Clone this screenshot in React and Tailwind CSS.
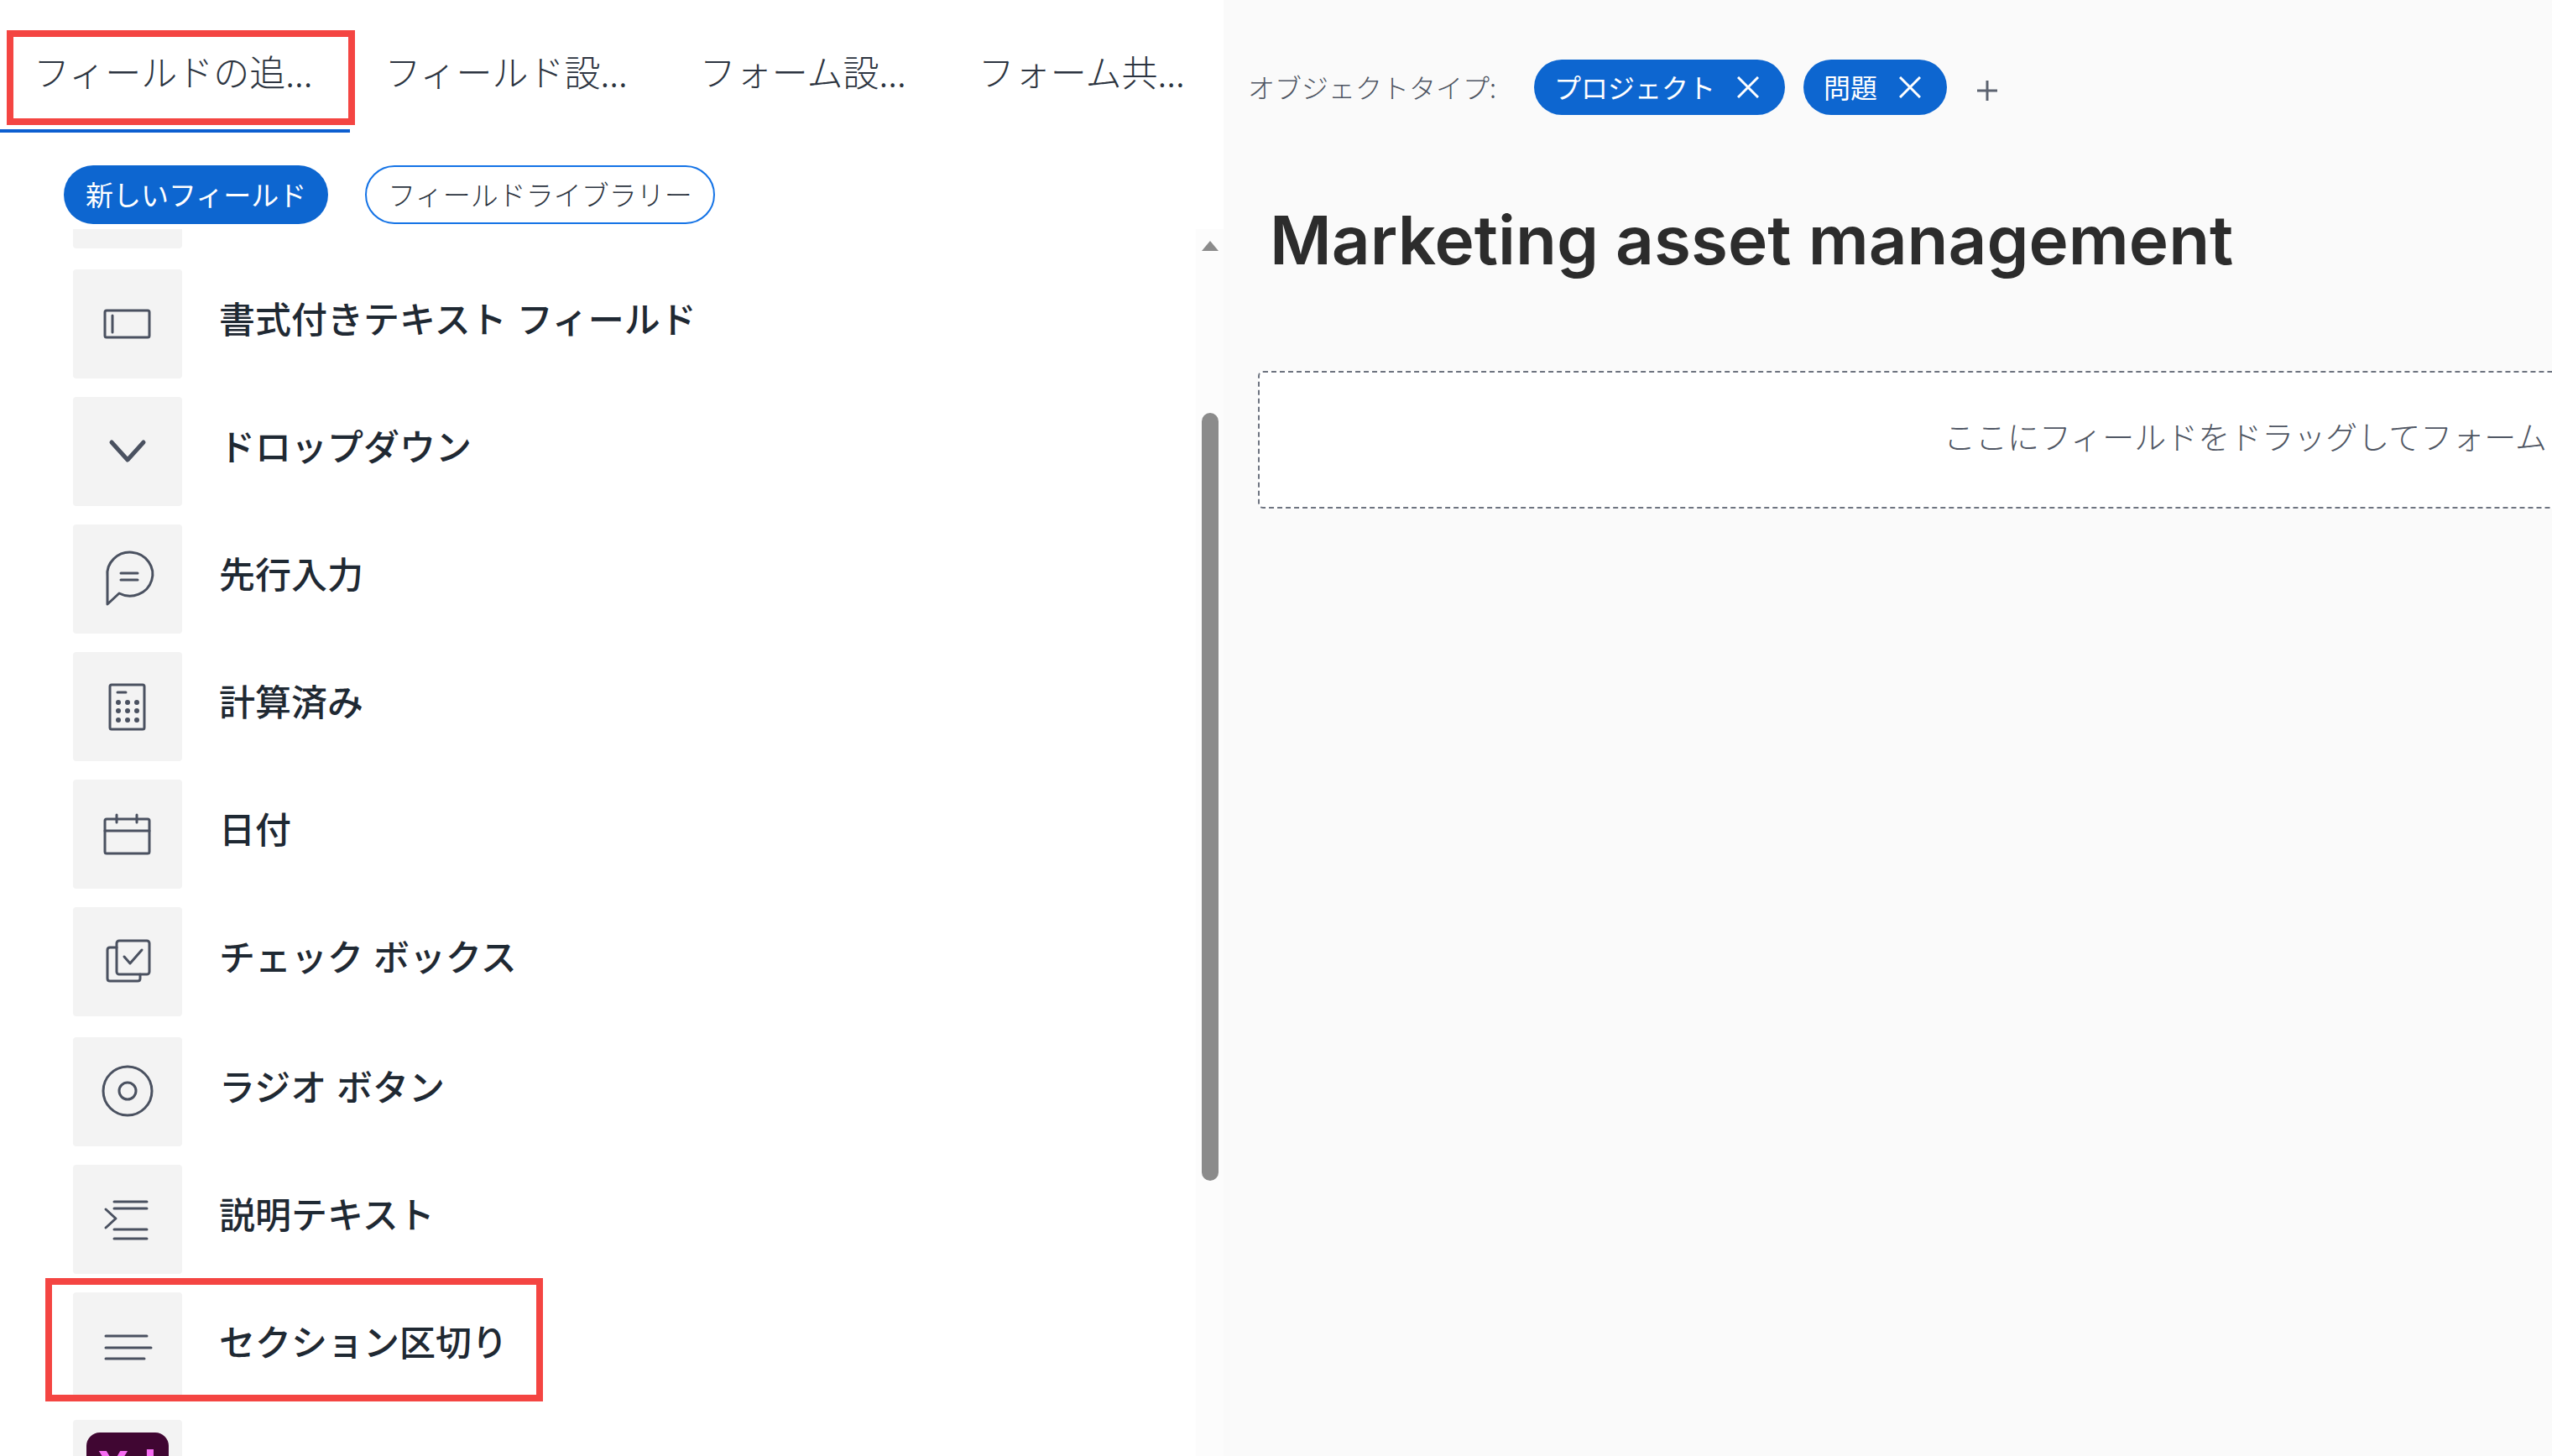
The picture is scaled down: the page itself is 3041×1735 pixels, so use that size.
function Icon({ children, width = 3 }) {
  return (
    <svg viewBox="0 0 130 130" className="size-full" fill="none" stroke="#4a5160" strokeWidth={width} strokeLinecap="round" strokeLinejoin="round" aria-hidden="true">
      {children}
    </svg>
  );
}

const TextFieldIcon = () => (
  <Icon>
    <rect x="38" y="49" width="53" height="32" rx="2" />
    <path d="M47 55v20" />
  </Icon>
);
const ChevronIcon = () => (
  <Icon width={5}>
    <path d="M46 54 65 75 84 54" />
  </Icon>
);
const BubbleIcon = () => (
  <Icon>
    <path d="M41 95V62a27 26 0 1 1 14 20Z" />
    <path d="M57 58h20M57 66h20" />
  </Icon>
);
const CalculatorIcon = () => (
  <Icon>
    <rect x="44" y="39" width="41" height="53" rx="2" />
    <path d="M53 48h10" />
    <g fill="#4a5160" stroke="none">
      {[60, 70, 81].map((y) => [54, 65, 76].map((x) => <circle key={x + "-" + y} cx={x} cy={y} r="3" />))}
    </g>
  </Icon>
);
const CalendarIcon = () => (
  <Icon>
    <rect x="38" y="47" width="53" height="41" rx="2" />
    <path d="M38 61h53M52 42v9M76 42v9" />
  </Icon>
);
const CheckIcon = () => (
  <Icon>
    <rect x="52" y="40" width="39" height="40" rx="3" />
    <path d="M52 48h-8q-3 0-3 3v34q0 3 3 3h33q3 0 3-3V80" />
    <path d="M61 59 68 67 82 51" />
  </Icon>
);
const RadioIcon = () => (
  <Icon>
    <circle cx="65" cy="64" r="29" />
    <circle cx="65" cy="64" r="10" />
  </Icon>
);
const IndentIcon = () => (
  <Icon>
    <path d="M49 44h39M49 52h39M49 77h39M49 88h39M39 53l12 11-12 11" />
  </Icon>
);
const LinesIcon = () => (
  <Icon>
    <path d="M39 52h49M39 66h54M39 79h46" />
  </Icon>
);

const inputFields = [
  ["書式付きテキスト フィールド", TextFieldIcon],
  ["ドロップダウン", ChevronIcon],
  ["先行入力", BubbleIcon],
  ["計算済み", CalculatorIcon],
  ["日付", CalendarIcon],
  ["チェック ボックス", CheckIcon],
];
const layoutFields = [
  ["ラジオ ボタン", RadioIcon],
  ["説明テキスト", IndentIcon],
  ["セクション区切り", LinesIcon, true],
];

function Field({ label, Glyph, marked }) {
  return (
    <li className="relative">
      <button type="button" className="flex h-[130px] w-full items-center gap-[44px] text-left">
        <span className="size-[130px] shrink-0 rounded-sm bg-[#f3f3f3]">
          <Glyph />
        </span>
        <span className='pb-2 font-["Liberation_Sans","Noto_Sans_CJK_JP",sans-serif] text-[43px] leading-[56px] font-medium whitespace-nowrap text-[#1f2933]'>
          {label}
        </span>
      </button>
      {marked && <span className="absolute -top-[17px] -left-[33px] h-[147px] w-[593px] border-8 border-[#f44542]" />}
    </li>
  );
}

function Tab({ children, selected }) {
  return (
    <button type="button" role="tab" aria-selected={!!selected} className="h-full pt-[10px] text-[43px] leading-[60px] font-light whitespace-nowrap">
      {children}
    </button>
  );
}

function Chip({ children }) {
  return (
    <span className="flex h-[66px] items-center gap-[26px] rounded-full bg-[#0d66d0] pr-[31px] pl-6 text-[32px] leading-[40px] whitespace-nowrap text-white">
      <span className="pb-[2px]">{children}</span>
      <button type="button" aria-label="削除">
        <svg viewBox="0 0 26 26" className="size-[26px]" fill="none" stroke="currentColor" strokeWidth="3" aria-hidden="true">
          <path d="M1 1 25 25M25 1 1 25" />
        </svg>
      </button>
    </span>
  );
}

export default function App() {
  return (
    <div className='flex h-screen overflow-hidden bg-white font-["Noto_Sans_CJK_JP",sans-serif] text-[#2c3440]'>
      <aside className="flex w-[1458px] shrink-0 flex-col">
        <div role="tablist" className="relative flex h-[158px] shrink-0 items-center gap-[86px] pl-[40px]">
          <Tab selected>フィールドの追...</Tab>
          <Tab>フィールド設...</Tab>
          <Tab>フォーム設...</Tab>
          <Tab>フォーム共...</Tab>
          <span className="absolute bottom-0 left-0 h-[4px] w-[417px] bg-[#0d5fd0]" />
          <span className="absolute top-[36px] left-[8px] h-[113px] w-[415px] border-8 border-[#f44542]" />
        </div>
        <div className="flex h-[115px] shrink-0 items-start gap-[44px] pt-[39px] pl-[76px] text-[33px] leading-[40px] whitespace-nowrap">
          <button type="button" className="h-[70px] rounded-full bg-[#0d66d0] px-[26px] pb-[2px] text-white">新しいフィールド</button>
          <button type="button" className="h-[70px] rounded-full border-2 border-[#1473e6] px-[25px] pb-[2px] font-light">フィールドライブラリー</button>
        </div>
        <div className="flex min-h-0 flex-1">
          <div className="flex flex-1 flex-col gap-[25px] overflow-hidden pl-[87px]">
            <span className="h-[23px] w-[130px] shrink-0 rounded-b-sm bg-[#f3f3f3]" />
            <ul className="flex flex-col gap-[22px]">
              {inputFields.map(([label, Glyph]) => (
                <Field key={label} label={label} Glyph={Glyph} />
              ))}
            </ul>
            <ul className="flex flex-col gap-[22px]">
              {layoutFields.map(([label, Glyph, marked]) => (
                <Field key={label} label={label} Glyph={Glyph} marked={marked} />
              ))}
              <li className="size-[130px] shrink-0 rounded-sm bg-[#f3f3f3] px-4 pt-[15px]">
                <span className='block h-[100px] rounded-2xl bg-[#400632] text-center font-["Open_Sans",sans-serif] text-[54px] leading-[80px] font-bold text-[#f66cf2]'>
                  Xd
                </span>
              </li>
            </ul>
          </div>
          <div className="flex w-[33px] shrink-0 flex-col items-center bg-[#fcfcfc] pt-[14px]">
            <svg viewBox="0 0 20 12" className="h-[12px] w-[20px]" aria-hidden="true">
              <path d="M10 0 20 12H0Z" fill="#8b8b8b" />
            </svg>
            <span className="mt-[193px] h-[915px] w-[20px] rounded-full bg-[#8b8b8b]" />
          </div>
        </div>
      </aside>
      <main className="min-w-0 flex-1 bg-[#fafafa]">
        <div className="flex items-center pt-[71px] pl-[29px]">
          <span className="mr-[45px] pb-[2px] text-[32px] leading-[40px] font-light whitespace-nowrap text-[#4f5663]">オブジェクトタイプ:</span>
          <div className="flex gap-[22px]">
            <Chip>プロジェクト</Chip>
            <Chip>問題</Chip>
          </div>
          <button type="button" aria-label="追加" className="ml-[35px] pt-[8px] text-[#5c6370]">
            <svg viewBox="0 0 26 26" className="size-[26px]" fill="none" stroke="currentColor" strokeWidth="3" aria-hidden="true">
              <path d="M13 1v24M1 13h24" />
            </svg>
          </button>
        </div>
        <h1 className='mt-[97px] pl-[55px] font-["Inter",sans-serif] text-[80px] leading-[104px] font-semibold whitespace-nowrap text-[#2c2c2c]'>Marketing asset management</h1>
        <div className="mt-[104px] ml-[41px] flex h-[164px] items-center justify-end overflow-hidden rounded-l-md border-2 border-r-0 border-dashed border-[#6e7480] bg-white">
          <p className="pr-[6px] pb-[10px] text-[38px] leading-[50px] font-light whitespace-nowrap text-[#4f5663]">ここにフィールドをドラッグしてフォーム</p>
        </div>
      </main>
    </div>
  );
}
